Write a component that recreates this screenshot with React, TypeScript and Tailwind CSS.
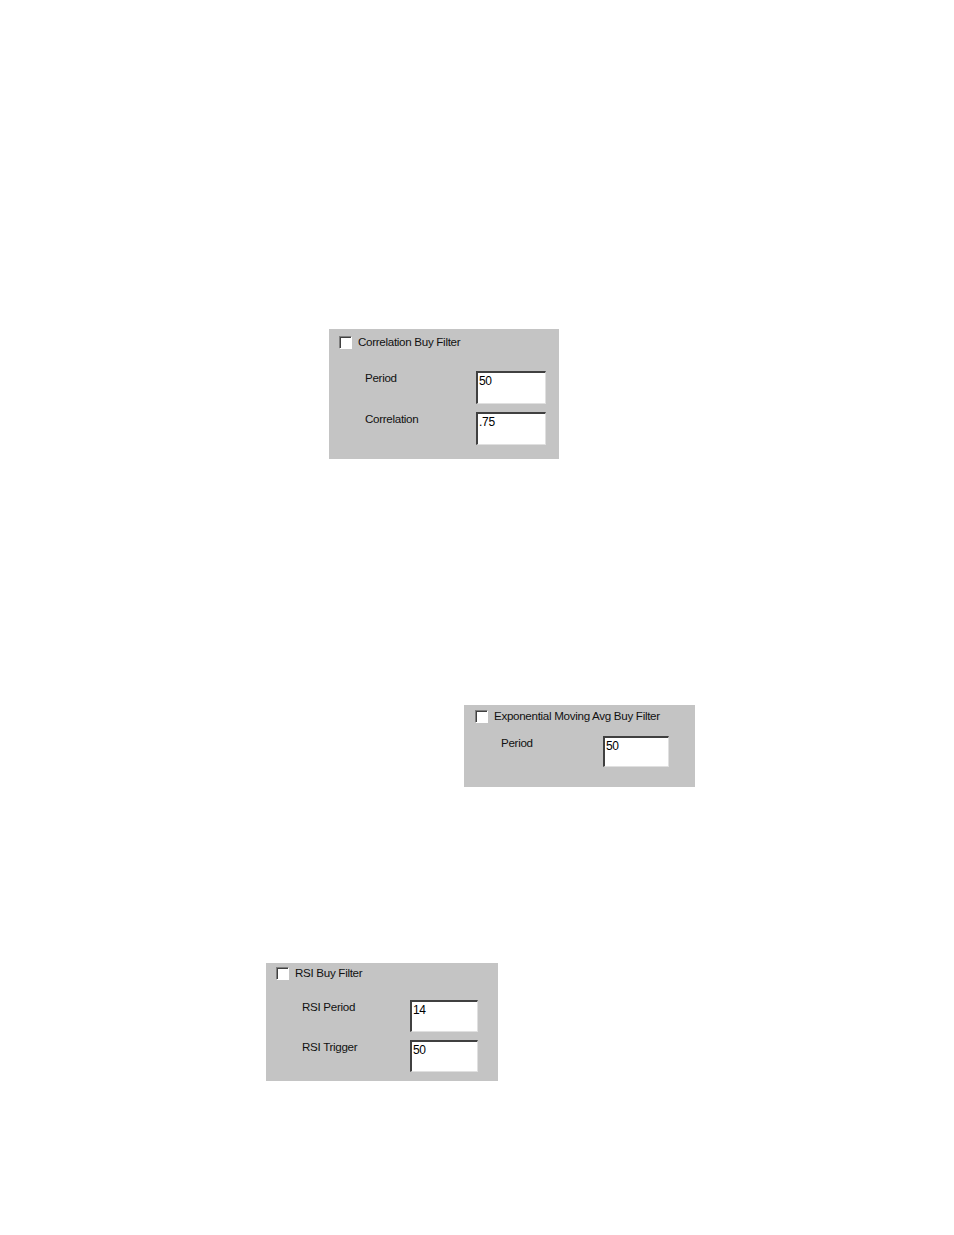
function CheckBox() {
  return (
    <span className="block w-[13px] h-[13px] shrink-0 bg-white border-t border-l border-t-[#808080] border-l-[#808080] border-b border-r border-b-white border-r-white shadow-[inset_1px_1px_0_#404040]" />
  );
}

function Field({ value }: { value: string }) {
  return (
    <div className="bg-white border-t-2 border-l-2 border-t-[#404040] border-l-[#404040] border-b border-r border-b-[#e0e0e0] border-r-[#e0e0e0] h-full pl-[1px] pt-[1px] text-[12px] leading-[14px] tracking-[-0.3px] text-black">
      {value}
    </div>
  );
}

type Row = { label: string; value: string };

function Panel({
  title,
  rows,
  className,
  labelW,
  fieldW,
  fieldH,
  rowGap,
  padTop,
}: {
  title: string;
  rows: Row[];
  className: string;
  labelW: string;
  fieldW: string;
  fieldH: string;
  rowGap: string;
  padTop: string;
}) {
  return (
    <div className={`bg-[#c4c4c4] ${className}`}>
      <div className="flex items-center gap-[6px]">
        <CheckBox />
        <span className="text-[11.6px] leading-[14px] text-[#111] tracking-[-0.3px]">{title}</span>
      </div>
      <div className={`flex flex-col ${rowGap} ${padTop}`}>
        {rows.map((r) => (
          <div key={r.label} className="flex">
            <span className={`${labelW} text-[11.6px] leading-[14px] tracking-[-0.3px] text-[#111]`}>{r.label}</span>
            <div className={`${fieldW} ${fieldH}`}>
              <Field value={r.value} />
            </div>
          </div>
        ))}
      </div>
    </div>
  );
}

export default function App() {
  return (
    <div className="w-[954px] h-[1235px] bg-white font-['Liberation_Sans',Arial,sans-serif] pt-[329px]">
      <div className="ml-[329px]">
        <Panel
          title="Correlation Buy Filter"
          rows={[
            { label: "Period", value: "50" },
            { label: "Correlation", value: ".75" },
          ]}
          className="w-[230px] h-[130px] pl-[10px] pt-[6px]"
          labelW="w-[111px] pl-[26px] box-content"
          fieldW="w-[70px]"
          fieldH="h-[33px]"
          rowGap="gap-[8px]"
          padTop="pt-[22px]"
        />
      </div>
      <div className="ml-[464px] mt-[246px]">
        <Panel
          title="Exponential Moving Avg Buy Filter"
          rows={[{ label: "Period", value: "50" }]}
          className="w-[231px] h-[82px] pl-[11px] pt-[4px]"
          labelW="w-[102px] pl-[26px] box-content"
          fieldW="w-[66px]"
          fieldH="h-[31px]"
          rowGap="gap-[8px]"
          padTop="pt-[13px]"
        />
      </div>
      <div className="ml-[266px] mt-[176px]">
        <Panel
          title="RSI Buy Filter"
          rows={[
            { label: "RSI Period", value: "14" },
            { label: "RSI Trigger", value: "50" },
          ]}
          className="w-[232px] h-[118px] pl-[10px] pt-[3px]"
          labelW="w-[108px] pl-[26px] box-content"
          fieldW="w-[68px]"
          fieldH="h-[32px]"
          rowGap="gap-[8px]"
          padTop="pt-[20px]"
        />
      </div>
    </div>
  );
}
